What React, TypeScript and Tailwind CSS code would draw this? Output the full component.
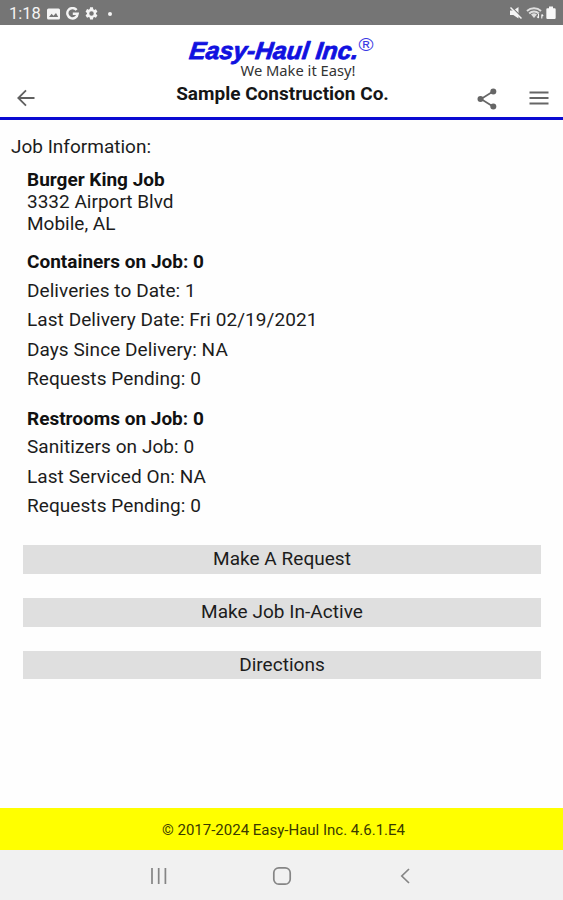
type SectionType = {
  title: string;
  titleClass: string;
  rows: string[];
};

const sections: SectionType[] = [
  {
    title: "Containers on Job: 0",
    titleClass: "pt-[0.8px] leading-[27.7px]",
    rows: [
      "Deliveries to Date: 1",
      "Last Delivery Date: Fri 02/19/2021",
      "Days Since Delivery: NA",
      "Requests Pending: 0",
    ],
  },
  {
    title: "Restrooms on Job: 0",
    titleClass: "leading-[27.2px]",
    rows: [
      "Sanitizers on Job: 0",
      "Last Serviced On: NA",
      "Requests Pending: 0",
    ],
  },
];

const actions = ["Make A Request", "Make Job In-Active", "Directions"];

function StatusBar() {
  return (
    <div className="flex h-[25px] flex-shrink-0 items-center justify-between bg-[#757575] pt-[2px] pr-[7px] pl-[9px] text-white">
      <div className="flex items-center">
        <span className="w-[33px] text-[16.5px] leading-[22px] text-[#f4f4f4]">1:18</span>
        <svg className="ml-[5px] h-[12px] w-[13px]" viewBox="0 0 13 12">
          <rect x="0" y="0.5" width="13" height="11" rx="1.5" fill="#f4f4f4" />
          <path d="M2 9l2.6-3.2 1.9 2L9 5l2.2 4z" fill="#757575" />
        </svg>
        <svg
          className="ml-[6px] h-[13px] w-[13px]"
          viewBox="0 0 13 13"
          fill="none"
          stroke="#f4f4f4"
          strokeWidth={2.4}
        >
          <path d="M10.6 3A5.2 5.2 0 1 0 11.7 6.7H6.8" />
        </svg>
        <svg className="ml-[5px] h-[15px] w-[15px]" viewBox="0 0 24 24">
          <path
            fill="#f4f4f4"
            fillRule="evenodd"
            d="M19.14 12.94c.04-.3.06-.61.06-.94s-.02-.64-.07-.94l2.03-1.58c.18-.14.23-.41.12-.61l-1.92-3.32c-.12-.22-.37-.29-.59-.22l-2.39.96c-.5-.38-1.03-.7-1.62-.94l-.36-2.54A.48.48 0 0 0 13.92 2h-3.84c-.24 0-.43.17-.47.41l-.36 2.54c-.59.24-1.13.57-1.62.94l-2.39-.96c-.22-.08-.47 0-.59.22L2.74 8.87c-.12.21-.08.47.12.61l2.03 1.58c-.05.3-.09.63-.09.94s.02.64.07.94l-2.03 1.58c-.18.14-.23.41-.12.61l1.92 3.32c.12.22.37.29.59.22l2.39-.96c.5.38 1.03.7 1.62.94l.36 2.54c.05.24.24.41.48.41h3.84c.24 0 .44-.17.47-.41l.36-2.54c.59-.24 1.13-.56 1.62-.94l2.39.96c.22.08.47 0 .59-.22l1.92-3.32c.12-.22.07-.47-.12-.61zM12 15.6A3.6 3.6 0 1 1 12 8.4a3.6 3.6 0 0 1 0 7.2z"
          />
        </svg>
        <span className="ml-[9px] h-1 w-1 rounded-full bg-[#f4f4f4]" />
      </div>
      <div className="mb-[2px] flex items-center">
        <svg className="h-[14px] w-[14px]" viewBox="0 0 14 14">
          <path d="M1 4.5h3.3L9.5 1v11.5L4.3 9H1z" fill="#f4f4f4" />
          <path d="M2.6 1l10.5 10.5" stroke="#757575" strokeWidth="1.4" />
          <path d="M1.5 1.5l11 11" stroke="#f4f4f4" strokeWidth="1.5" />
        </svg>
        <svg className="ml-[3px] h-[14px] w-[18px]" viewBox="0 0 18 14" fill="none">
          <path d="M1 5a10.5 10.5 0 0 1 14 0M3.2 7.4a7 7 0 0 1 9.6 0" stroke="#dedede" strokeWidth="2" />
          <path d="M5 8.5a4.5 4.5 0 0 1 6 0L8 12z" fill="#dedede" />
          <path d="M12.5 8v4m-1.5-1.5l1.5 1.7M15.8 12.5v-4m1.4 1.6l-1.4-1.8" stroke="#f4f4f4" strokeWidth="1.1" />
        </svg>
        <svg className="ml-[2px] h-[14px] w-[10px]" viewBox="0 0 9 14" preserveAspectRatio="none">
          <path d="M2.7 0.5h3.6v1.7h1.4a1 1 0 0 1 1 1V12a1 1 0 0 1-1 1H1.3a1 1 0 0 1-1-1V3.2a1 1 0 0 1 1-1h1.4z" fill="#f8f8f8" />
        </svg>
      </div>
    </div>
  );
}

function Logo() {
  return (
    <svg className="h-[42px] w-[200px] overflow-visible" viewBox="0 0 200 42" aria-label="Easy-Haul Inc.">
      <text
        transform="translate(5.5 22.5) skewX(-7)"
        textLength="169"
        lengthAdjust="spacingAndGlyphs"
        strokeLinejoin="round"
        className="fill-[#1111e0] stroke-[#1111e0] stroke-[0.8] font-['Liberation_Sans'] text-[24.5px] font-bold italic"
      >
        Easy-Haul Inc.
      </text>
      <text x="175.5" y="15" className="fill-[#3a3ae4] font-['Liberation_Sans'] text-[19px]" textLength="15" lengthAdjust="spacingAndGlyphs">
        ®
      </text>
      <text
        x="57.5"
        y="40"
        textLength="115"
        lengthAdjust="spacingAndGlyphs"
        className="fill-[#333] font-['Noto_Sans'] text-[14px]"
      >
        We Make it Easy!
      </text>
    </svg>
  );
}

function Header() {
  return (
    <header className="flex h-[95px] flex-shrink-0 justify-between border-b-[3px] border-[#0a0ad2] bg-white">
      <button className="mt-[64px] ml-[17px] h-[18px] w-[18px]" aria-label="Back">
        <svg viewBox="0 0 18 18" fill="none" stroke="#606060" strokeWidth="1.8">
          <path d="M17.5 9H1.5M9 1.3L1.3 9 9 16.7" />
        </svg>
      </button>
      <div className="ml-[53px] flex flex-1 flex-col items-center pt-[11px]">
        <Logo />
        <h1 className="mt-[3px] text-[19px] leading-[26px] font-bold whitespace-nowrap text-[#161616]">
          Sample Construction Co.
        </h1>
      </div>
      <div className="mt-[63px] mr-[14px] flex">
        <button className="h-[22px] w-[20px]" aria-label="Share">
          <svg viewBox="0 0 20 22" fill="#666" stroke="#666">
            <path d="M16 3.5L4 11l12 7.5" fill="none" strokeWidth="1.7" />
            <circle cx="16.3" cy="3.5" r="3" stroke="none" />
            <circle cx="3.5" cy="11" r="3" stroke="none" />
            <circle cx="16.3" cy="18.5" r="3" stroke="none" />
          </svg>
        </button>
        <button className="ml-[32px] h-[22px] w-[20px]" aria-label="Menu">
          <svg viewBox="0 0 20 22" stroke="#666" strokeWidth="2">
            <path d="M0.5 4.5h19M0.5 10h19M0.5 15.5h19" />
          </svg>
        </button>
      </div>
    </header>
  );
}

export default function App() {
  return (
    <div className="flex h-[900px] w-full flex-col overflow-hidden bg-[#fefefe] font-['Roboto',sans-serif] text-[#1c1c1c]">
      <StatusBar />
      <Header />

      <main className="flex-1 text-[19px]">
        <p className="pt-[15px] pl-[11px] leading-[24px]">Job Information:</p>

        {/* Job details */}
        <div className="pt-[10px] pl-[27px]">
          <div className="leading-[22.2px]">
            <h2 className="font-bold text-[#111]">Burger King Job</h2>
            <p>3332 Airport Blvd</p>
            <p>Mobile, AL</p>
          </div>
          {sections.map((section) => (
            <section key={section.title} className="pt-[11.4px] leading-[29.5px] tracking-[0.07px]">
              <h2 className={`${section.titleClass} font-bold tracking-normal text-[#111]`}>{section.title}</h2>
              {section.rows.map((row) => (
                <p key={row}>{row}</p>
              ))}
            </section>
          ))}
        </div>

        <div className="flex flex-col gap-6 px-[22.5px] pt-[24.4px]">
          {actions.map((label) => (
            <button key={label} className="h-[28.8px] bg-[#dfdfdf] pb-px pl-px leading-[27px] tracking-[0.04px]">
              {label}
            </button>
          ))}
        </div>
      </main>

      <footer className="flex h-[42px] flex-shrink-0 items-center justify-center bg-[#ffff00] pt-[2px] pl-[4px] text-[15px] text-[#3a3a00]">
        © 2017-2024 Easy-Haul Inc. 4.6.1.E4
      </footer>

      {/* Android navigation */}
      <nav className="flex h-[50px] flex-shrink-0 items-center bg-[#f1f1f1] pt-px pl-[150px]">
        <svg className="h-[18px] w-[18px]" viewBox="0 0 18 18" stroke="#858585" strokeWidth="1.7">
          <path d="M2 1v16M8.7 1v16M15.4 1v16" />
        </svg>
        <svg className="ml-[104px] h-[20px] w-[20px]" viewBox="0 0 20 20" fill="none" stroke="#858585" strokeWidth="1.7">
          <rect x="1.8" y="1.8" width="16.4" height="16.4" rx="5" />
        </svg>
        <svg className="ml-[108px] h-[18px] w-[10px]" viewBox="0 0 10 18" fill="none" stroke="#858585" strokeWidth="1.7">
          <path d="M9 2L1.8 9 9 16" />
        </svg>
      </nav>
    </div>
  );
}
